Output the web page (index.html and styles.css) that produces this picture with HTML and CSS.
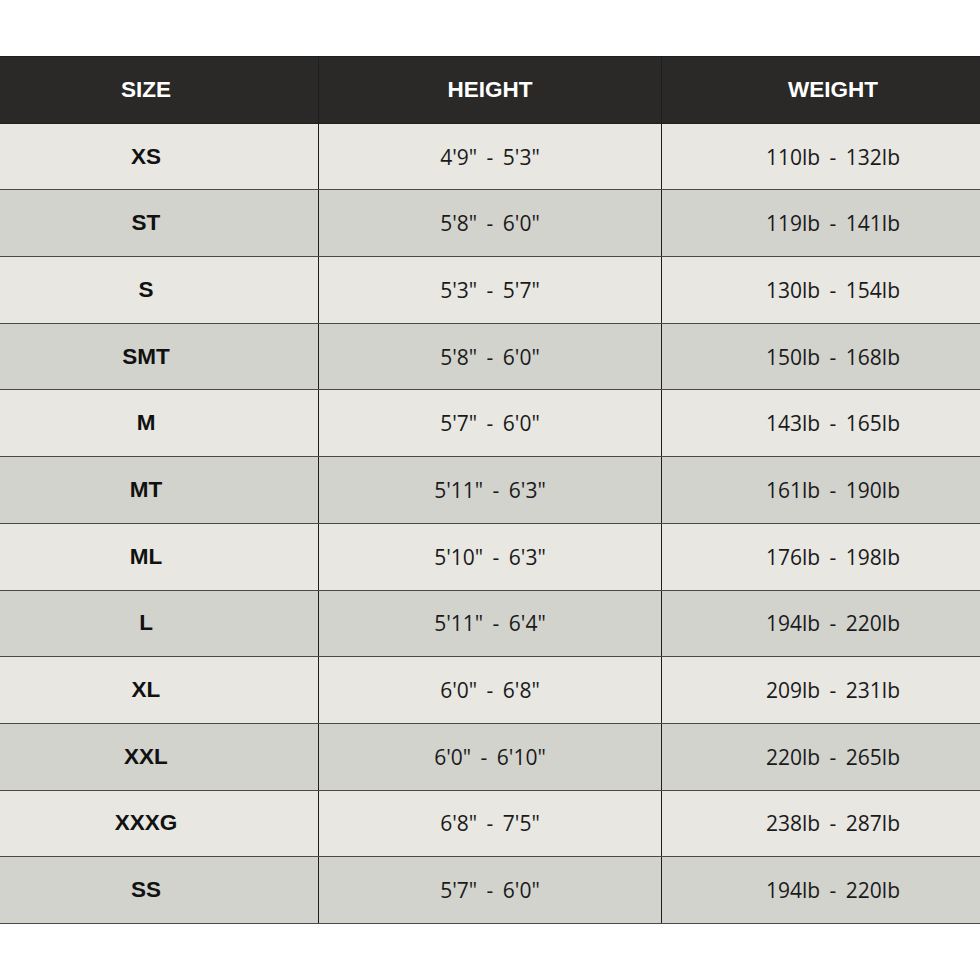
FILE: index.html
```html
<!DOCTYPE html>
<html>
<head>
<meta charset="utf-8">
<link rel="stylesheet" href="styles.css">
</head>
<body>
<div class="page">
<table class="chart">
<colgroup>
<col class="c-size">
<col class="c-height">
<col class="c-weight">
</colgroup>
<thead>
<tr><th>SIZE</th><th>HEIGHT</th><th>WEIGHT</th></tr>
</thead>
<tbody>
<tr><td class="size">XS</td><td>4'9" - 5'3"</td><td>110lb - 132lb</td></tr>
<tr><td class="size">ST</td><td>5'8" - 6'0"</td><td>119lb - 141lb</td></tr>
<tr><td class="size">S</td><td>5'3" - 5'7"</td><td>130lb - 154lb</td></tr>
<tr><td class="size">SMT</td><td>5'8" - 6'0"</td><td>150lb - 168lb</td></tr>
<tr><td class="size">M</td><td>5'7" - 6'0"</td><td>143lb - 165lb</td></tr>
<tr><td class="size">MT</td><td>5'11" - 6'3"</td><td>161lb - 190lb</td></tr>
<tr><td class="size">ML</td><td>5'10" - 6'3"</td><td>176lb - 198lb</td></tr>
<tr><td class="size">L</td><td>5'11" - 6'4"</td><td>194lb - 220lb</td></tr>
<tr><td class="size">XL</td><td>6'0" - 6'8"</td><td>209lb - 231lb</td></tr>
<tr><td class="size">XXL</td><td>6'0" - 6'10"</td><td>220lb - 265lb</td></tr>
<tr><td class="size">XXXG</td><td>6'8" - 7'5"</td><td>238lb - 287lb</td></tr>
<tr><td class="size">SS</td><td>5'7" - 6'0"</td><td>194lb - 220lb</td></tr>
</tbody>
</table>
</div>
</body>
</html>
```
FILE: styles.css
```css
html, body {
  margin: 0;
  padding: 0;
  background: #ffffff;
  overflow: hidden;
}
.page {
  padding-top: 56px;
  width: 980px;
  overflow: hidden;
}
.chart {
  margin-left: -27px;
  width: 1031px;
  border-collapse: collapse;
  table-layout: fixed;
}
.c-size { width: 345px; }
.c-height { width: 343px; }
.c-weight { width: 343px; }
.chart th,
.chart td {
  height: 65.7px;
  padding: 0;
  text-align: center;
  vertical-align: middle;
  border: 1px solid #1e1e1e;
  border-top-color: #4a4a48;
  border-bottom-color: #4a4a48;
}
.chart th {
  background: #2a2927;
  color: #ffffff;
  font-family: "Liberation Sans", Arial, sans-serif;
  font-weight: bold;
  font-size: 22.5px;
  border-color: #1e1e1e;
}
.chart td {
  font-family: "Open Sans", "Noto Sans", sans-serif;
  font-size: 21px;
  word-spacing: 4px;
  color: #1a1a1a;
}
.chart td.size {
  font-family: "Liberation Sans", Arial, sans-serif;
  font-weight: bold;
  font-size: 22.5px;
  word-spacing: 0;
  color: #111111;
}
.chart tbody tr:nth-child(odd) td {
  background: #e8e7e2;
}
.chart tbody tr:nth-child(even) td {
  background: #d3d3ce;
}
```
